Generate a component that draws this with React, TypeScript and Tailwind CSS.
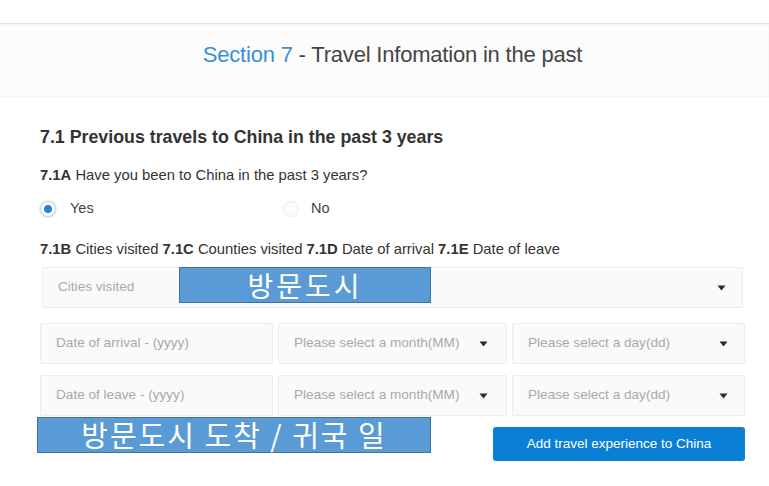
import React from "react";

const Caret = () => (
  <svg width="9" height="6" viewBox="0 0 9 6" className="shrink-0">
    <path d="M0.5 0.5 L8.5 0.5 L4.5 5.5 Z" fill="#2a2a2a" />
  </svg>
);

const Field = ({ text, caret = false, caretPad = "pr-[18px]" }: { text: string; caret?: boolean; caretPad?: string }) => (
  <div className={`h-[41px] bg-[#fafafa] border border-[#ececec] rounded-[2px] flex items-center justify-between pl-[15px] ${caretPad}`}>
    <span className="text-[13.6px] text-[#a9a9a9]">{text}</span>
    {caret && <Caret />}
  </div>
);

export default function App() {
  return (
    <div className="w-[769px] h-[486px] bg-white overflow-hidden relative" style={{ fontFamily: '"Liberation Sans", Arial, sans-serif' }}>
      <div className="h-[23px] bg-white" />
      <div className="h-[74px] bg-[#fcfcfc] border-t border-[#e2e2e2] shadow-[inset_0_1px_2px_rgba(0,0,0,0.04)] border-b border-b-[#f5f5f5] flex items-center justify-center pl-[16px]">
        <div className="text-[22px] text-[#454545] tracking-[-0.2px] -mt-[11px]">
          <span className="text-[#3a8fd6]">Section 7</span> - Travel Infomation in the past
        </div>
      </div>
      <div className="pl-[40px] pr-[24px] pt-[30px]">
        <h2 className="text-[17.8px] leading-[21px] font-bold text-[#333]">7.1 Previous travels to China in the past 3 years</h2>
        <p className="mt-[18px] text-[14.8px] leading-[18px] text-[#333]">
          <span className="font-bold">7.1A</span> Have you been to China in the past 3 years?
        </p>
        <div className="mt-[15px] h-[20px] flex items-center text-[14.5px] text-[#444]">
          <div className="w-[243px] flex items-center">
            <span className="w-[16px] h-[16px] rounded-full border border-[#c9dcef] bg-white shadow-[0_0_2px_rgba(58,143,214,0.5)] flex items-center justify-center">
              <span className="w-[8px] h-[8px] rounded-full bg-[#2f7fd1]" />
            </span>
            <span className="ml-[14px]">Yes</span>
          </div>
          <div className="flex items-center">
            <span className="w-[16px] h-[16px] rounded-full border border-[#ececec] bg-[#fbfbfb]" />
            <span className="ml-[12px]">No</span>
          </div>
        </div>
        <p className="mt-[21px] text-[14.8px] leading-[18px] text-[#333]">
          <span className="font-bold">7.1B</span> Cities visited <span className="font-bold">7.1C</span> Counties visited{" "}
          <span className="font-bold">7.1D</span> Date of arrival <span className="font-bold">7.1E</span> Date of leave
        </p>
        <div className="mt-[9px] ml-[2px] mr-[2px]">
          <Field text="Cities visited" caret caretPad="pr-[16px]" />
        </div>
        <div className="mt-[15px] grid grid-cols-[233px_229px_233px] gap-[5px]">
          <Field text="Date of arrival - (yyyy)" />
          <Field text="Please select a month(MM)" caret />
          <Field text="Please select a day(dd)" caret caretPad="pr-[16px]" />
        </div>
        <div className="mt-[11px] grid grid-cols-[233px_229px_233px] gap-[5px]">
          <Field text="Date of leave - (yyyy)" />
          <Field text="Please select a month(MM)" caret />
          <Field text="Please select a day(dd)" caret caretPad="pr-[16px]" />
        </div>
        <div className="mt-[11px] flex justify-end">
          <button className="w-[252px] h-[34px] bg-[#0b7fd6] rounded-[3px] text-white text-[13.5px]">Add travel experience to China</button>
        </div>
      </div>

      <div
        className="absolute left-[179px] top-[267px] w-[252px] h-[36px] bg-[#5b9bd5] border border-[#41719c] flex items-center justify-center text-white text-[28px] tracking-[3px]"
        style={{ fontFamily: '"Noto Sans CJK KR", sans-serif' }}
      >
        방문도시
      </div>
      <div
        className="absolute left-[37px] top-[417px] w-[394px] h-[36px] bg-[#5b9bd5] border border-[#41719c] flex items-center justify-center text-white text-[29px] tracking-[2px]"
        style={{ fontFamily: '"Noto Sans CJK KR", sans-serif' }}
      >
        방문도시 도착 / 귀국 일
      </div>
    </div>
  );
}
